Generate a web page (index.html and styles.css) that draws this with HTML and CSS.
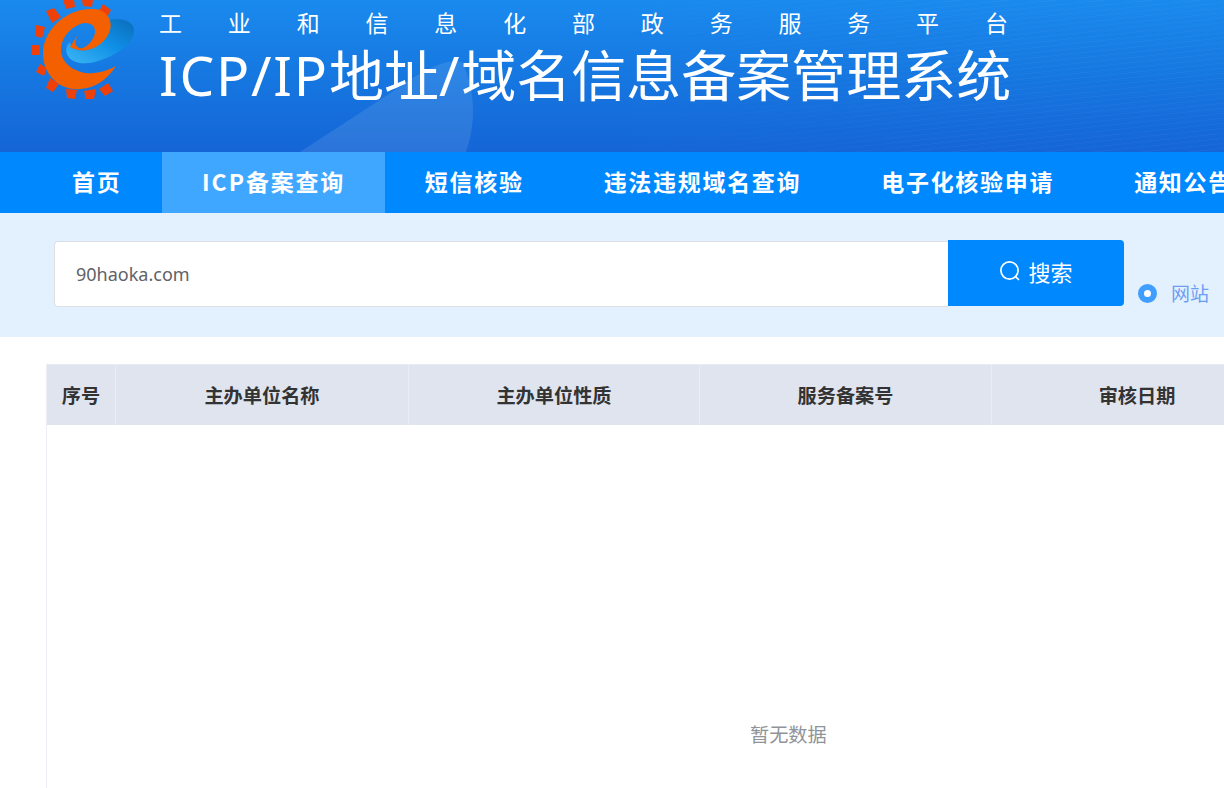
FILE: index.html
```html
<!DOCTYPE html>
<html lang="zh-CN">
<head>
<meta charset="utf-8">
<title>ICP/IP地址/域名信息备案管理系统</title>
<link rel="stylesheet" href="styles.css">
</head>
<body>
<header class="banner">
  <svg class="banner-art" width="1224" height="152" viewBox="0 0 1224 152" aria-hidden="true">
    <path d="M300 152 L392 92 C420 72 445 58 462 62 C476 90 476 125 466 152 Z" fill="#fff" fill-opacity=".1"/>
  </svg>
  <svg class="logo" width="140" height="100" viewBox="0 0 140 100" aria-hidden="true">
    <defs>
      <linearGradient id="swoosh" x1="0" y1="1" x2="1" y2="0">
        <stop offset="0" stop-color="#3cb6f4"/>
        <stop offset=".55" stop-color="#0f8ee6"/>
        <stop offset="1" stop-color="#0b6db8"/>
      </linearGradient>
    </defs>
    <g fill="#ee4008">
      <path d="M46 11l8-3 7 9-9 6z"/><path d="M63 0h11l1 7-9 2z"/><path d="M82 0h11l-1 7-9-1z"/><path d="M103 4l8 6-5 9-8-6z"/>
      <path d="M36 25l9 2-3 11-7-2z"/><path d="M32 45h8v10h-8z"/><path d="M40 64l7 4-3 8-8-4z"/>
      <path d="M50 78l9 6-6 8-7-4z"/><path d="M66 89l11 1-2 9-8-1z"/><path d="M84 91l12-2-2 10-8 0z"/><path d="M108 83l5 8-8 5-6-7z"/>
    </g>
    <path fill="url(#swoosh)" d="M108 20C122 17 134 22 134 30 134 44 116 56 95 62 84 65 72 63 68 56 65 51 66 45 70 42 71 48 77 52 87 50 100 46 112 34 108 20Z"/>
    <path fill="#f46000" d="M94 9C108 10 114 22 109 33 103 46 86 56 70 47 73 43 75 38 78 35 74 41 75 46 79 48 84 50 93 42 95 33 96 24 88 21 80 24 68 29 60 40 61 52 63 67 81 75 94 73 103 72 111 69 116 66 108 78 97 88 80 89 60 91 43 75 43 53 43 30 67 7 94 9Z"/>
  </svg>
  <div class="titles">
    <p class="tagline"><span>工</span><span>业</span><span>和</span><span>信</span><span>息</span><span>化</span><span>部</span><span>政</span><span>务</span><span>服</span><span>务</span><span>平</span><span>台</span></p>
    <h1 class="main-title"><span class="latin">ICP/IP</span>地址<span class="latin">/</span>域名信息备案管理系统</h1>
  </div>
</header>
<nav class="nav">
  <a class="nav-item">首页</a>
  <a class="nav-item is-active"><span class="nav-latin">ICP</span>备案查询</a>
  <a class="nav-item">短信核验</a>
  <a class="nav-item">违法违规域名查询</a>
  <a class="nav-item">电子化核验申请</a>
  <a class="nav-item">通知公告</a>
</nav>
<section class="search-band">
  <div class="search-input">90haoka.com</div>
  <button class="search-btn" type="button">
    <svg width="22" height="22" viewBox="0 0 22 22" fill="none" stroke="#fff" stroke-width="1.7" aria-hidden="true"><circle cx="10.500" cy="10.500" r="8.600"/><path d="M16.500 16.500l3 3" stroke-linecap="round"/></svg>
    <span>搜索</span>
  </button>
  <div class="radio"><span class="radio-dot"></span><span class="radio-label">网站</span></div>
</section>
<main class="table-wrap">
  <div class="thead">
    <div class="th th-index">序号</div>
    <div class="th th-name">主办单位名称</div>
    <div class="th th-type">主办单位性质</div>
    <div class="th th-no">服务备案号</div>
    <div class="th th-date">审核日期</div>
  </div>
  <div class="empty">暂无数据</div>
</main>
</body>
</html>
```
FILE: styles.css
```css
* { box-sizing: border-box; }
html, body { margin: 0; padding: 0; width: 1224px; height: 788px; overflow: hidden; background: #fff; }
body { font-family: "Noto Sans", "Noto Sans CJK SC", sans-serif; }

.banner {
  position: relative;
  height: 152px;
  overflow: hidden;
  display: flex;
  background: linear-gradient(180deg, #1a8aee 0%, #1679e2 45%, #1565d6 100%);
}
.banner::before {
  content: "";
  position: absolute;
  inset: 0;
  background: repeating-linear-gradient(174deg, rgba(255,255,255,.03) 0 1px, rgba(255,255,255,0) 1px 5px);
  -webkit-mask-image: linear-gradient(90deg, transparent 45%, #000 80%);
  mask-image: linear-gradient(90deg, transparent 45%, #000 80%);
}
.banner-art { position: absolute; left: 0; top: 0; }
.logo { position: absolute; left: 0; top: 0; }
.titles { position: relative; margin-left: 159px; width: 860px; }
.tagline {
  margin: 8px 0 0;
  display: flex;
  justify-content: space-between;
  width: 849px;
  height: 30px;
  font-family: "Noto Sans CJK SC", sans-serif;
  font-size: 23px;
  line-height: 28px;
  color: #fff;
}
.main-title {
  margin: 4px 0 0;
  font-family: "Noto Sans CJK SC", sans-serif;
  font-weight: 400;
  font-size: 55px;
  line-height: 60px;
  color: #fff;
  white-space: nowrap;
}
.latin {
  font-family: "Noto Sans", sans-serif;
  letter-spacing: 1.800px;
}

.nav {
  display: flex;
  height: 61px;
  padding-left: 32px;
  background: #0088ff;
  white-space: nowrap;
}
.nav-item {
  flex: none;
  padding: 0 40px;
  font-family: "Noto Sans CJK SC", sans-serif;
  font-size: 23px;
  font-weight: 700;
  letter-spacing: 1.700px;
  line-height: 59px;
  color: #fff;
}
.nav-item:first-child { padding-right: 40.600px; }
.nav-item.is-active { background: #3fa7ff; }
.nav-latin { letter-spacing: 2px; }

.search-band {
  display: flex;
  align-items: flex-start;
  height: 124px;
  padding: 27px 0 0 54px;
  background: #e3f1ff;
}
.search-input {
  width: 894px;
  height: 66px;
  margin-top: 1px;
  padding-left: 21px;
  border: 1px solid #dcdfe6;
  border-right: 0;
  border-radius: 4px 0 0 4px;
  background: #fff;
  font-size: 18px;
  line-height: 64px;
  color: #606266;
}
.search-btn {
  display: flex;
  align-items: center;
  justify-content: center;
  gap: 7px;
  width: 176px;
  height: 66px;
  padding: 0 0 4px;
  border: 0;
  border-radius: 0 4px 4px 0;
  background: #0088ff;
  color: #fff;
  font-family: "Noto Sans CJK SC", sans-serif;
  font-size: 22px;
}
.radio { display: flex; align-items: center; margin: 39px 0 0 14px; }
.radio-dot {
  width: 19px;
  height: 19px;
  border-radius: 50%;
  border: 6px solid #409eff;
  background: #fff;
}
.radio-label {
  margin-left: 14px;
  font-family: "Noto Sans CJK SC", sans-serif;
  font-size: 19px;
  line-height: 28px;
  color: #6f9df5;
}

.table-wrap {
  margin: 27px 0 0 46px;
  height: 424px;
  border-left: 1px solid #ebeef5;
  position: relative;
}
.thead {
  display: flex;
  width: 1240px;
  height: 61px;
  background: #e0e4ef;
  border-top: 1px solid #e8ebf3;
}
.th {
  flex: none;
  border-right: 1px solid #e9ecf4;
  font-family: "Noto Sans CJK SC", sans-serif;
  font-size: 19.200px;
  font-weight: 700;
  line-height: 60px;
  text-align: center;
  color: #333;
}
.th-index { width: 69px; }
.th-name { width: 293px; }
.th-type { width: 291px; }
.th-no { width: 292px; }
.th-date { width: 290px; border-right: 0; }
.empty {
  margin: 295px 0 0 703px;
  font-family: "Noto Sans CJK SC", sans-serif;
  font-size: 19.200px;
  line-height: 28px;
  color: #909399;
}
```
